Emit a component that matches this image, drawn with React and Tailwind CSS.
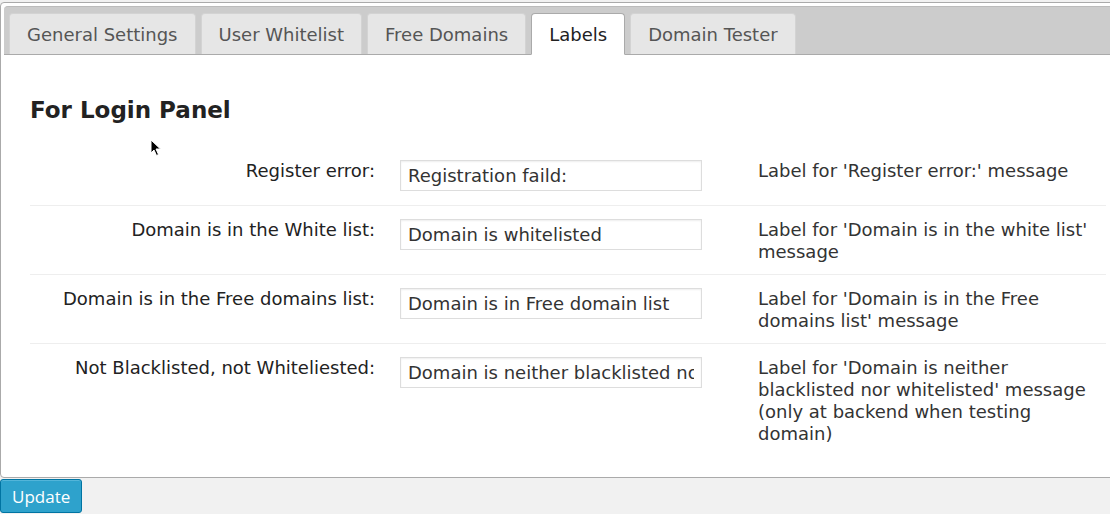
import React from "react";

const rows = [
  { label: "Register error:", value: "Registration faild:", desc: "Label for 'Register error:' message" },
  { label: "Domain is in the White list:", value: "Domain is whitelisted", desc: "Label for 'Domain is in the white list' message" },
  { label: "Domain is in the Free domains list:", value: "Domain is in Free domain list", desc: "Label for 'Domain is in the Free domains list' message" },
  { label: "Not Blacklisted, not Whiteliested:", value: "Domain is neither blacklisted nor whitelisted", desc: "Label for 'Domain is neither blacklisted nor whitelisted' message (only at backend when testing domain)" },
];

const tabs = ["General Settings", "User Whitelist", "Free Domains", "Labels", "Domain Tester"];

export default function App() {
  return (
    <div
      className="relative w-[1110px] h-[514px] overflow-hidden bg-[#f1f1f1] text-[#333]"
      style={{ fontFamily: '"DejaVu Sans", Verdana, sans-serif' }}
    >
      <div className="pt-[2px]">
        <div className="w-[1118px] h-[476px] bg-white border border-[#aaa] rounded-[4px] p-[3px] flex flex-col">
          {/* tab bar */}
          <div className="h-[49px] bg-[#cccccc] border-t border-[#bbb] border-b border-b-[#aaa] rounded-t-[4px] flex items-end gap-[5px] pl-[5px]">
            {tabs.map((t) =>
              t === "Labels" ? (
                <div
                  key={t}
                  className="h-[42px] -mb-px px-[17px] bg-white border border-[#aaa] border-b-white rounded-t-[4px] flex items-center text-[18px] text-[#222]"
                >
                  {t}
                </div>
              ) : (
                <div
                  key={t}
                  className="h-[41px] px-[17px] bg-[#e6e6e6] border border-[#d3d3d3] border-b-0 rounded-t-[4px] flex items-center text-[18px] text-[#555]"
                >
                  {t}
                </div>
              )
            )}
          </div>

          {/* content */}
          <div className="pl-[26px] pr-[8px]">
            <h2 className="mt-[40px] text-[23px] leading-[30px] font-bold text-[#222]">For Login Panel</h2>
            <div className="mt-[22px] w-[1076px]">
              {rows.map((r, i) => (
                <div
                  key={i}
                  className={`flex pt-[13px] pb-[11px] ${i < rows.length - 1 ? "border-b border-[#eeeeee]" : ""}`}
                >
                  <div className="w-[345px] text-right text-[18px] leading-[22px] text-[#222] shrink-0">{r.label}</div>
                  <div className="w-[383px] pl-[25px] shrink-0">
                    <input
                      readOnly
                      defaultValue={r.value}
                      className="block w-[302px] h-[31px] mb-[3px] border border-[#ddd] bg-white px-[7px] text-[18px] text-[#333] shadow-[inset_0_1px_2px_rgba(0,0,0,0.07)] outline-none"
                      style={{ fontFamily: '"DejaVu Sans", Verdana, sans-serif' }}
                    />
                  </div>
                  <div className="w-[332px] text-[18px] leading-[22px] text-[#333]">{r.desc}</div>
                </div>
              ))}
            </div>
          </div>
        </div>
      </div>

      <button className="mt-px ml-0 h-[34px] px-[11px] bg-[#2ea2cc] border border-[#0074a2] rounded-[3px] text-white text-[17px] leading-none shadow-[inset_0_1px_0_rgba(120,200,230,0.5)]"
        style={{ fontFamily: '"Open Sans", sans-serif' }}>
        Update
      </button>

      {/* mouse cursor */}
      <svg className="absolute left-[150px] top-[139px]" width="12" height="18" viewBox="0 0 12 18">
        <path d="M1 1 L1 14 L4 11 L6.5 16.5 L8.5 15.5 L6 10 L10.5 10 Z" fill="#000" stroke="#fff" strokeWidth="1" />
      </svg>
    </div>
  );
}
